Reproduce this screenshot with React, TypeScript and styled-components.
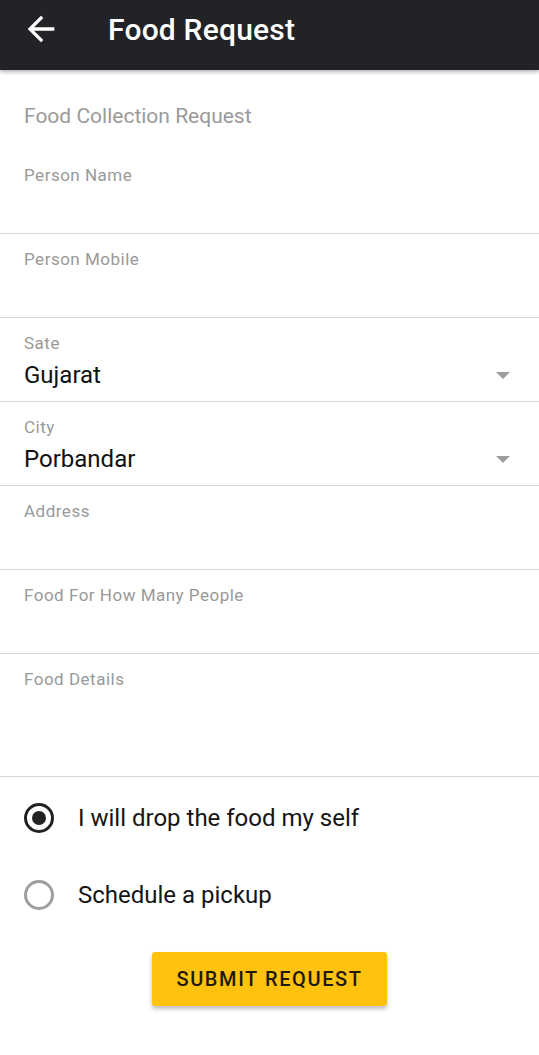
import * as React from 'react'
import styled, { createGlobalStyle } from 'styled-components'

const GlobalStyle = createGlobalStyle`
  html, body {
    margin: 0;
    padding: 0;
    background: #fff;
  }
  body {
    font-family: Roboto, "Noto Sans", sans-serif;
  }
`

const Page = styled.div`
  width: 539px;
  min-height: 1055px;
  background: #fff;
  display: flex;
  flex-direction: column;
`

const AppBar = styled.header`
  height: 70px;
  background: #222327;
  display: flex;
  align-items: center;
  padding-left: 21px;
  padding-bottom: 12px;
  box-sizing: border-box;
  box-shadow: 0 2px 4px rgba(0, 0, 0, 0.3);
  position: relative;
  z-index: 1;
`

const BackButton = styled.button`
  border: 0;
  background: none;
  padding: 0;
  width: 40px;
  height: 40px;
  display: flex;
  align-items: center;
  justify-content: center;
  cursor: pointer;
`

const Title = styled.h1`
  margin: 0 0 0 47px;
  color: #fff;
  font-size: 30px;
  font-weight: 500;
  letter-spacing: 0.2px;
`

const Form = styled.form`
  display: flex;
  flex-direction: column;
`

const FormHeading = styled.h2`
  margin: 32px 24px 20px;
  font-size: 21px;
  line-height: 28px;
  font-weight: 400;
  color: #9a9a9a;
`

const Field = styled.div<{ $tall?: boolean }>`
  height: ${p => (p.$tall ? 107 : 68)}px;
  border-bottom: 1px solid #d8d8d8;
  padding: 15px 24px 0;
`

const Label = styled.label`
  display: block;
  font-size: 17px;
  line-height: 20px;
  letter-spacing: 0.5px;
  color: #999;
`

const Value = styled.div`
  margin-top: 8px;
  font-size: 24px;
  line-height: 28px;
  color: #111;
  display: flex;
  justify-content: space-between;
  align-items: center;
`

const Caret = styled.span`
  width: 0;
  height: 0;
  margin-right: 5px;
  border-left: 7px solid transparent;
  border-right: 7px solid transparent;
  border-top: 7px solid #9e9e9e;
`

const RadioGroup = styled.div`
  display: flex;
  flex-direction: column;
  gap: 29px;
  padding: 17px 24px 0;
`

const RadioRow = styled.label`
  height: 48px;
  display: flex;
  align-items: center;
  gap: 24px;
  font-size: 24px;
  color: #151515;
  cursor: pointer;
`

const RadioCircle = styled.span<{ $checked?: boolean }>`
  width: 30px;
  height: 30px;
  box-sizing: border-box;
  border-radius: 50%;
  border: 3px solid ${p => (p.$checked ? '#222' : '#9e9e9e')};
  display: flex;
  align-items: center;
  justify-content: center;

  &::after {
    content: '';
    width: 14px;
    height: 14px;
    border-radius: 50%;
    background: #222;
    display: ${p => (p.$checked ? 'block' : 'none')};
  }
`

const Actions = styled.div`
  display: flex;
  justify-content: center;
  padding-top: 33px;
`

const SubmitButton = styled.button`
  width: 235px;
  height: 54px;
  border: 0;
  border-radius: 3px;
  background: #ffc20e;
  color: #1d1a10;
  font-family: Roboto, sans-serif;
  font-size: 20px;
  font-weight: 500;
  letter-spacing: 1.6px;
  text-transform: uppercase;
  box-shadow: 0 3px 4px rgba(0, 0, 0, 0.25);
  cursor: pointer;
`

const fields = [
  { label: 'Person Name' },
  { label: 'Person Mobile' },
  { label: 'Sate', value: 'Gujarat', select: true },
  { label: 'City', value: 'Porbandar', select: true },
  { label: 'Address' },
  { label: 'Food For How Many People' },
  { label: 'Food Details', tall: true },
]

const App: React.FC = () => {
  const [mode, setMode] = React.useState('drop')

  return (
    <Page>
      <GlobalStyle />
      <AppBar>
        <BackButton type="button" aria-label="Back">
          <svg width="40" height="40" viewBox="0 0 24 24">
            <path d="M20 11H7.83l5.59-5.59L12 4l-8 8 8 8 1.41-1.41L7.83 13H20v-2z" fill="#fff" />
          </svg>
        </BackButton>
        <Title>Food Request</Title>
      </AppBar>
      <Form onSubmit={e => e.preventDefault()}>
        <FormHeading>Food Collection Request</FormHeading>
        {fields.map(f => (
          <Field key={f.label} $tall={f.tall}>
            <Label>{f.label}</Label>
            {f.value && (
              <Value>
                {f.value}
                {f.select && <Caret />}
              </Value>
            )}
          </Field>
        ))}
        <RadioGroup>
          <RadioRow onClick={() => setMode('drop')}>
            <RadioCircle $checked={mode === 'drop'} />
            I will drop the food my self
          </RadioRow>
          <RadioRow onClick={() => setMode('pickup')}>
            <RadioCircle $checked={mode === 'pickup'} />
            Schedule a pickup
          </RadioRow>
        </RadioGroup>
        <Actions>
          <SubmitButton type="submit">Submit Request</SubmitButton>
        </Actions>
      </Form>
    </Page>
  )
}

export default App
